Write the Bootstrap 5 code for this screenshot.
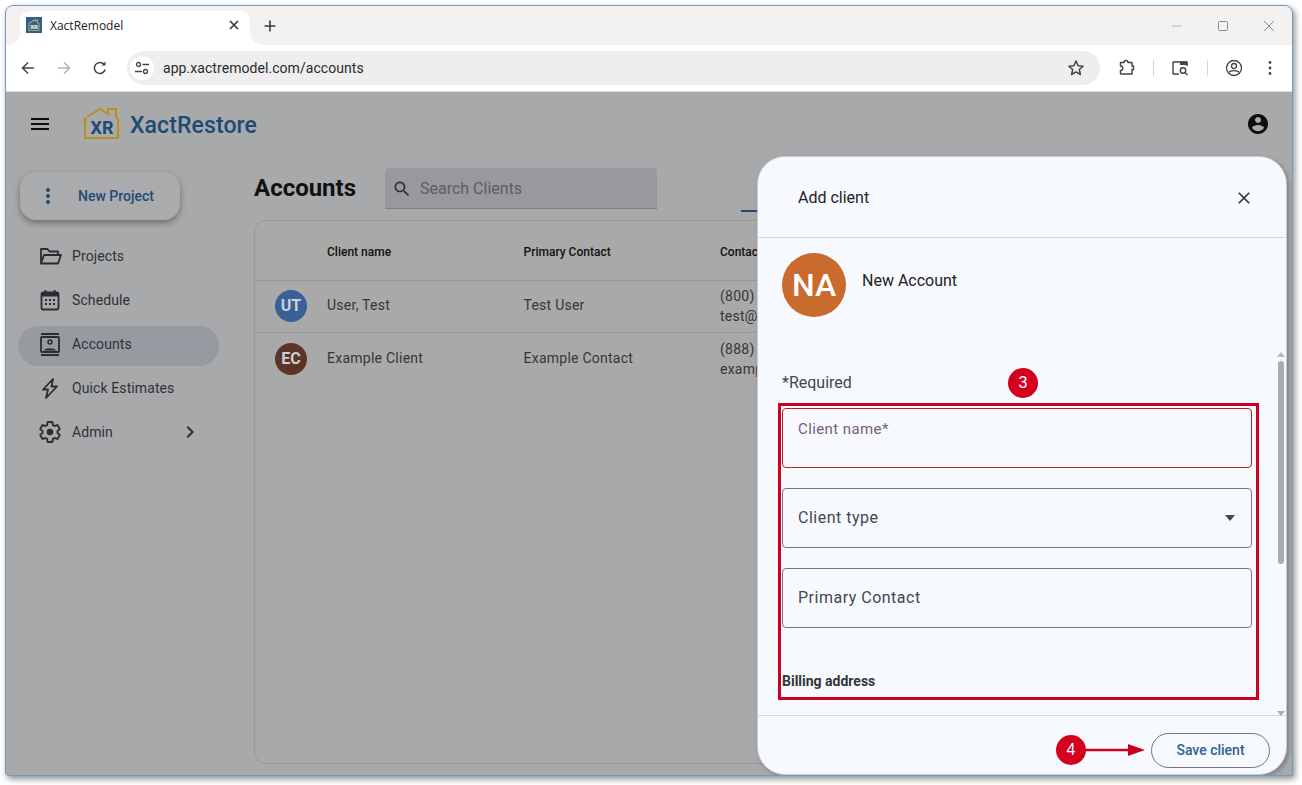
<!DOCTYPE html>
<html lang="en">
<head>
  <meta charset="UTF-8" />
  <title>XactRemodel</title>
  <link href="https://cdn.jsdelivr.net/npm/bootstrap@5.3.3/dist/css/bootstrap.min.css" rel="stylesheet" />
  <style>
    html, body { height: 100%; }
    body { background: #fff; font-family: Roboto, "Liberation Sans", sans-serif; padding: 5px 0 0 5px; overflow: hidden; }
    .win { width: 1288px; height: 771px; border: 1px solid #6f9cc4; border-radius: 8px 8px 0 4px; box-shadow: 2px 3px 6px rgba(0,0,0,.45); background: #a8a9ab; overflow: hidden; position: relative; }

    /* browser chrome */
    .tabstrip { height: 39px; background: #f3f2f1; padding-left: 14px; flex: none; }
    .chrome-tab { width: 230px; height: 34px; background: #fff; border-radius: 10px 10px 0 0; position: relative; padding: 0 8px 6px 6px; font: 12px "Open Sans", "Liberation Sans", sans-serif; color: #222; }
    .chrome-tab::before, .chrome-tab::after { content: ""; position: absolute; bottom: 0; width: 12px; height: 12px; }
    .chrome-tab::before { left: -12px; background: radial-gradient(circle at 0 0, #f3f2f1 11.5px, #fff 12px); }
    .chrome-tab::after { right: -12px; background: radial-gradient(circle at 100% 0, #f3f2f1 11.5px, #fff 12px); }
    .favicon { width: 16px; height: 16px; background: #2c5f93; flex: none; }
    .tab-title { margin-left: 8px; }
    .plus-btn { margin-left: 8px; width: 24px; }
    .win-ctl { width: 46px; }
    .toolbar { height: 47px; background: #fff; border-bottom: 1px solid #dedede; padding-left: 4px; flex: none; }
    .tbtn { width: 36px; height: 36px; flex: none; }
    .urlbar { width: 973px; height: 34px; margin-left: 9px; margin-right: 9px; background: #efedee; border-radius: 17px; padding: 0 6px 0 3px; flex: none; }
    .site-chip { width: 24px; height: 24px; background: #fff; flex: none; }
    .url-text { margin-left: 9px; font-size: 14px; letter-spacing: .06px; color: #2a2a2c; flex-grow: 1; }
    .star-ic { margin-right: 9px; }
    .tsep { width: 1px; height: 16px; background: #d5d5d5; margin: 0 8px; flex: none; }
    .tsep-wide { margin-left: 9px; }

    /* app */
    .app-bar { height: 64px; flex: none; padding: 0 22px 0 22px; }
    .brand-name { font-size: 23px; font-weight: 500; letter-spacing: .1px; color: #1f4a75; margin-left: 11px; margin-top: 4px; }
    .brand-logo { margin-left: 30px; }
    .side { width: 248px; flex: none; padding-top: 16px; }
    .new-btn { width: 160px; height: 48px; margin-left: 14px; border-radius: 16px; background: #aaabad; box-shadow: 0 3px 6px rgba(40,40,45,.45); color: #1f4a75; font-size: 14px; font-weight: 500; padding: 0 0 0 16px; gap: 18px; border: 0; }
    .side-nav { margin-top: 18px; margin-left: 12px; width: 201px; gap: 4px; }
    .side-link { height: 40px; border-radius: 20px; padding: 0 17px 4px 20px; gap: 10px; color: #2f3136; font-size: 14px; letter-spacing: .1px; }
    .side-link.on { background: #989aa2; }
    .main-col { padding-top: 12px; min-width: 0; }
    .acc-title { font-size: 24px; font-weight: 700; color: #111; margin: 0; width: 131px; line-height: 41px; }
    .search-box { width: 272px; height: 41px; background: #98999d; border-bottom: 1px solid #808185; border-radius: 4px 4px 0 0; padding: 1px 0 0 7px; gap: 8px; color: #5d5e62; font-size: 16px; }
    .tab-mark { width: 60px; height: 2px; background: #1f4a75; margin-left: 84px; margin-bottom: -3px; align-self: flex-end; }
    .acc-card { width: 1016px; height: 544px; margin-top: 11px; background: #a9a9a9; border: 1px solid #97989a; border-radius: 12px; }
    .acc-table { --bs-table-bg: transparent; --bs-table-border-color: #97989a; table-layout: fixed; font-size: 14px; letter-spacing: .25px; color: #35363a; }
    .acc-table th { height: 59px; font-size: 12px; font-weight: 500; color: #111; letter-spacing: 0; vertical-align: middle; padding: 3px 0 0; }
    .acc-table td { height: 52px; vertical-align: middle; padding: 0 0 2px; color: #35363a; line-height: 20px; }
    .acc-table td.multi { padding: 0; }
    .acc-table tr:last-child td { height: 53px; border-bottom: 0; }
    .ava { width: 32px; height: 32px; margin-left: 20px; margin-top: 2px; color: #cfcfd6; font-weight: 700; font-size: 16px; letter-spacing: 0; }

    /* dialog */
    .dlg { position: absolute; left: 751px; top: 150px; width: 530px; height: 619px; background: #f6fafe; border: 1px solid #c9cbd0; border-radius: 28px; box-shadow: 2px 2px 4px rgba(0,0,0,.25); overflow: hidden; }
    .dlg-head { height: 81px; flex: none; border-bottom: 1px solid #d6dade; padding: 1px 32px 0 40px; font-size: 16px; color: #1f2125; }
    .dlg-body { flex-grow: 1; min-height: 0; padding: 15px 34px 0 24px; color: #2f3136; overflow: hidden; }
    .big-ava { width: 64px; height: 64px; background: #c96b2c; color: #fff; font-size: 32px; font-weight: 500; flex: none; }
    .who { margin-left: 16px; margin-top: 18px; font-size: 16px; line-height: 20px; color: #1f2125; }
    .req-note { margin-top: 56px; font-size: 16px; line-height: 20px; color: #44474e; }
    .fld { height: 60px; border: 1px solid #74777f; border-radius: 4px; background-color: transparent; color: #44474e; font-size: 16px; letter-spacing: .5px; padding: 0 15px; box-shadow: none; }
    .fld::placeholder { color: #44474e; opacity: 1; }
    .form-control.fld { padding-bottom: 2px; }
    .fld-list { margin-top: 15px; gap: 20px; }
    .fld-name { border-color: #b3261e; padding-top: 10px; color: #7b5a78; font-size: 15px; letter-spacing: .4px; line-height: 20px; }
    .form-select.fld { background-repeat: no-repeat; background-position: right 15px center; background-size: 12px 6px; background-image: url("data:image/svg+xml,%3Csvg xmlns='http://www.w3.org/2000/svg' viewBox='0 0 12 6'%3E%3Cpath fill='%2344474e' d='M1 0h10L6 6z'/%3E%3C/svg%3E"); }
    .bill-head { margin-top: 43px; font-size: 14px; font-weight: 700; line-height: 20px; color: #33353a; }
    .dlg-foot { height: 59px; flex: none; border-top: 1px solid #d6dade; padding: 17px 16px 0 0; }
    .save-btn { width: 119px; height: 35px; border: 1px solid #74777f; border-radius: 18px; background: transparent; color: #2f5f94; font-size: 14px; font-weight: 500; padding: 0; }
    .sbar { position: absolute; left: 519px; top: 193px; width: 8px; height: 366px; }
    .sbar-thumb { position: absolute; top: 11px; left: 1px; width: 6px; height: 203px; background: #a9acb0; border-radius: 3px; }
    .sbar-up, .sbar-down { position: absolute; left: 0; width: 0; height: 0; border-left: 4px solid transparent; border-right: 4px solid transparent; }
    .sbar-up { top: 2px; border-bottom: 5px solid #b5b8bc; }
    .sbar-down { bottom: 0; border-top: 5px solid #a9acb0; }

    /* red callouts drawn over the page */
    .note-box { position: absolute; left: 772px; top: 397px; width: 481px; height: 297px; border: 3px solid #cc0020; }
    .note-dot { position: absolute; width: 30px; height: 30px; background: #d5001f; color: #fff; font-size: 16px; line-height: 30px; text-align: center; font-family: "Liberation Sans", sans-serif; }
    .dot-3 { left: 1002px; top: 362px; }
    .dot-4 { left: 1050px; top: 729px; }
    .note-arrow { position: absolute; left: 1078px; top: 737px; }
  </style>
</head>
<body>
  <div class="win d-flex flex-column">

    <div class="tabstrip d-flex align-items-end">
      <div class="chrome-tab d-flex align-items-center">
        <svg class="favicon" viewBox="0 0 16 16"><path d="M3 13.500V6.500L8 3l1.500 1V3h2v2.500l1.500 1.500v6.500z" fill="none" stroke="#c9a23a" stroke-width="1.100"/><text x="8" y="12" text-anchor="middle" font-family="Roboto, sans-serif" font-size="6" font-weight="700" fill="#fff">XR</text></svg>
        <span class="tab-title flex-grow-1">XactRemodel</span>
        <svg width="16" height="16" viewBox="0 0 16 16"><path d="M4 4l8 8M12 4l-8 8" stroke="#333" stroke-width="1.600"/></svg>
      </div>
      <div class="plus-btn d-flex justify-content-center align-self-center ms-2">
        <svg width="16" height="16" viewBox="0 0 16 16"><path d="M8 2.500v11M2.500 8h11" stroke="#3c3c3c" stroke-width="1.600"/></svg>
      </div>
      <div class="ms-auto d-flex align-self-center">
        <div class="win-ctl d-flex justify-content-center"><svg width="12" height="12" viewBox="0 0 12 12"><path d="M1 6h10" stroke="#b4b4b4" stroke-width="1.200"/></svg></div>
        <div class="win-ctl d-flex justify-content-center"><svg width="12" height="12" viewBox="0 0 12 12"><rect x="1.500" y="1.500" width="9" height="9" rx="1" fill="none" stroke="#8c8c8c"/></svg></div>
        <div class="win-ctl d-flex justify-content-center"><svg width="12" height="12" viewBox="0 0 12 12"><path d="M1 1l10 10M11 1L1 11" stroke="#8c8c8c"/></svg></div>
      </div>
    </div>

    <div class="toolbar d-flex align-items-center">
      <div class="tbtn d-flex align-items-center justify-content-center"><svg width="16" height="16" viewBox="0 0 16 16"><path d="M14 8H2.500M8 2.500L2.500 8 8 13.500" fill="none" stroke="#444" stroke-width="1.500"/></svg></div>
      <div class="tbtn d-flex align-items-center justify-content-center"><svg width="16" height="16" viewBox="0 0 16 16"><path d="M2 8h11.500M8 2.500L13.500 8 8 13.500" fill="none" stroke="#b5b5b5" stroke-width="1.500"/></svg></div>
      <div class="tbtn d-flex align-items-center justify-content-center"><svg width="16" height="16" viewBox="0 0 16 16"><path d="M13.200 9.500A5.500 5.500 0 1 1 12 4.300" fill="none" stroke="#444" stroke-width="1.500"/><path d="M13.500 1.500v4h-4z" fill="#444"/></svg></div>
      <div class="urlbar d-flex align-items-center">
        <div class="site-chip rounded-circle d-flex align-items-center justify-content-center"><svg width="16" height="16" viewBox="0 0 16 16"><circle cx="4.500" cy="4.500" r="2" fill="none" stroke="#444" stroke-width="1.300"/><path d="M8.500 4.500H15M1 11.500h7" stroke="#444" stroke-width="1.300"/><circle cx="11.500" cy="11.500" r="2" fill="none" stroke="#444" stroke-width="1.300"/></svg></div>
        <span class="url-text">app.xactremodel.com/accounts</span>
        <svg class="star-ic" width="18" height="18" viewBox="0 0 18 18"><path d="M9 2l2.100 4.700 5 .5-3.800 3.300 1.100 5L9 12.900l-4.400 2.600 1.100-5L1.900 7.200l5-.5z" fill="none" stroke="#444" stroke-width="1.500" stroke-linejoin="round"/></svg>
      </div>
      <div class="tbtn d-flex align-items-center justify-content-center"><svg width="18" height="18" viewBox="0 0 18 18"><path d="M2.500 3.500h3.500a2 2 0 0 1 4 0h4v3.500h1.500v3.500H14v4.500H3a1 1 0 0 1-.5-1v-2.500a2 2 0 0 0 0-4.500z" fill="none" stroke="#444" stroke-width="1.500" stroke-linejoin="round"/></svg></div>
      <div class="tsep"></div>
      <div class="tbtn d-flex align-items-center justify-content-center"><svg width="18" height="18" viewBox="0 0 18 18"><path d="M8 15H2.500a.5.500 0 0 1-.5-.5V3.500a.5.500 0 0 1 .5-.5H15.500a.5.500 0 0 1 .5.500V7" fill="none" stroke="#444" stroke-width="1.400"/><path d="M9 2.500h7.500V6H9z" fill="#444"/><circle cx="12" cy="11.500" r="2.700" fill="none" stroke="#444" stroke-width="1.400"/><path d="M14 13.500l2.500 2.500" stroke="#444" stroke-width="1.400"/></svg></div>
      <div class="tsep tsep-wide"></div>
      <div class="tbtn d-flex align-items-center justify-content-center"><svg width="18" height="18" viewBox="0 0 18 18"><circle cx="9" cy="9" r="7.500" fill="none" stroke="#444" stroke-width="1.300"/><circle cx="9" cy="7" r="2.500" fill="none" stroke="#444" stroke-width="1.300"/><path d="M3.800 13.500c1.500-2.500 9-2.500 10.400 0" fill="none" stroke="#444" stroke-width="1.300"/></svg></div>
      <div class="tbtn d-flex align-items-center justify-content-center"><svg width="16" height="16" viewBox="0 0 16 16"><circle cx="8" cy="2.500" r="1.400" fill="#444"/><circle cx="8" cy="8" r="1.400" fill="#444"/><circle cx="8" cy="13.500" r="1.400" fill="#444"/></svg></div>
    </div>

    <div class="app-bar d-flex align-items-center">
      <svg width="24" height="24" viewBox="0 0 24 24"><path d="M3 18h18v-2H3v2zm0-5h18v-2H3v2zm0-7v2h18V6H3z" fill="#0d0d0d"/></svg>
      <svg class="brand-logo" width="37" height="34" viewBox="0 0 37 34">
        <path d="M3 13v18h33V12l-2-2V2h-8v5l-8-5L5 10" fill="none" stroke="#b8901f" stroke-width="2"/>
        <path d="M0 13.500L3 10l3 3.500z" fill="#b8901f"/>
        <text x="20" y="27" text-anchor="middle" font-family="Roboto, sans-serif" font-size="18" font-weight="700" fill="#1f4a75">XR</text>
      </svg>
      <span class="brand-name flex-grow-1">XactRestore</span>
      <svg width="24" height="24" viewBox="0 0 24 24"><path d="M12 2C6.480 2 2 6.480 2 12s4.480 10 10 10 10-4.480 10-10S17.520 2 12 2zm0 3c1.660 0 3 1.340 3 3s-1.340 3-3 3-3-1.340-3-3 1.340-3 3-3zm0 14.200c-2.500 0-4.710-1.280-6-3.220.03-1.990 4-3.080 6-3.080 1.990 0 5.970 1.090 6 3.080-1.290 1.940-3.500 3.220-6 3.220z" fill="#0d0d0d"/></svg>
    </div>

    <div class="d-flex flex-grow-1" style="min-height:0">
      <aside class="side">
        <button class="new-btn btn d-flex align-items-center" type="button">
          <svg width="24" height="24" viewBox="0 0 24 24"><path d="M12 8c1.100 0 2-.9 2-2s-.9-2-2-2-2 .9-2 2 .9 2 2 2zm0 2c-1.100 0-2 .9-2 2s.9 2 2 2 2-.9 2-2-.9-2-2-2zm0 6c-1.100 0-2 .9-2 2s.9 2 2 2 2-.9 2-2-.9-2-2-2z" fill="#1f4a75"/></svg>
          New Project
        </button>
        <nav class="side-nav nav flex-column">
          <div class="side-link d-flex align-items-center">
            <svg width="24" height="24" viewBox="0 0 24 24"><path d="M3 19.500V5h6.500l2 2.500H20V11M3 19.500L6 11h17l-3 8.500z" fill="none" stroke="#2b2c30" stroke-width="1.800" stroke-linejoin="round"/></svg>
            Projects
          </div>
          <div class="side-link d-flex align-items-center">
            <svg width="24" height="24" viewBox="0 0 24 24"><rect x="3.500" y="4.500" width="17" height="17" rx="1.500" fill="none" stroke="#2b2c30" stroke-width="1.800"/><path d="M3.500 8.500h17V5h-17z" fill="#2b2c30"/><path d="M7.500 2v3M16.500 2v3" stroke="#2b2c30" stroke-width="2"/><path d="M7 12h2M11 12h2M15 12h2M7 16h2M11 16h2M15 16h2" stroke="#2b2c30" stroke-width="1.800"/></svg>
            Schedule
          </div>
          <div class="side-link on d-flex align-items-center">
            <svg width="24" height="24" viewBox="0 0 24 24"><path d="M3 2h18M3 23h18" stroke="#2b2c30" stroke-width="2"/><rect x="3" y="5" width="18" height="15" rx="1" fill="none" stroke="#2b2c30" stroke-width="1.800"/><circle cx="12" cy="10" r="2" fill="none" stroke="#2b2c30" stroke-width="1.600"/><path d="M6 18.500c1-3 11-3 12 0z" fill="#2b2c30"/></svg>
            Accounts
          </div>
          <div class="side-link d-flex align-items-center">
            <svg width="24" height="24" viewBox="0 0 24 24"><path d="M15 3L5 13.500h5L8 22l11-11.500h-5.500z" fill="none" stroke="#2b2c30" stroke-width="1.800" stroke-linejoin="round"/></svg>
            Quick Estimates
          </div>
          <div class="side-link d-flex align-items-center">
            <svg width="24" height="24" viewBox="0 0 24 24"><path d="M19.430 12.980c.04-.32.07-.64.07-.98 0-.34-.03-.66-.07-.98l2.110-1.650c.19-.15.24-.42.12-.64l-2-3.460c-.12-.22-.39-.3-.61-.22l-2.490 1c-.52-.4-1.080-.73-1.690-.98l-.38-2.650C14.460 2.180 14.250 2 14 2h-4c-.25 0-.46.18-.49.42l-.38 2.650c-.61.25-1.170.59-1.690.98l-2.490-1c-.23-.09-.49 0-.61.22l-2 3.460c-.13.22-.07.49.12.64l2.110 1.650c-.04.32-.07.65-.07.98 0 .33.03.66.07.98l-2.110 1.650c-.19.15-.24.42-.12.64l2 3.460c.12.22.39.3.61.22l2.490-1c.52.4 1.080.73 1.690.98l.38 2.650c.03.24.24.42.49.42h4c.25 0 .46-.18.49-.42l.38-2.650c.61-.25 1.170-.59 1.690-.98l2.490 1c.23.09.49 0 .61-.22l2-3.460c.12-.22.07-.49-.12-.64l-2.110-1.650z" fill="none" stroke="#2b2c30" stroke-width="1.800"/><circle cx="12" cy="12" r="3.200" fill="#2b2c30"/></svg>
            <span class="flex-grow-1">Admin</span>
            <svg width="24" height="24" viewBox="0 0 24 24"><path d="M10 6L8.590 7.410 13.170 12l-4.580 4.590L10 18l6-6z" fill="#2b2c30"/></svg>
          </div>
        </nav>
      </aside>

      <main class="main-col flex-grow-1">
        <div class="d-flex align-items-center">
          <h1 class="acc-title">Accounts</h1>
          <div class="search-box d-flex align-items-center">
            <svg width="20" height="20" viewBox="0 0 24 24"><path d="M15.500 14h-.79l-.28-.27C15.410 12.590 16 11.110 16 9.500 16 5.910 13.090 3 9.500 3S3 5.910 3 9.500 5.910 16 9.500 16c1.610 0 3.090-.59 4.230-1.570l.27.28v.79l5 4.990L20.490 19l-4.990-5zm-6 0C7.010 14 5 11.990 5 9.500S7.010 5 9.500 5 14 7.010 14 9.500 11.990 14 9.500 14z" fill="#303135"/></svg>
            Search Clients
          </div>
          <div class="tab-mark"></div>
        </div>
        <div class="acc-card">
          <table class="table acc-table mb-0">
            <colgroup><col style="width:72px"><col style="width:196.500px"><col style="width:196.500px"><col></colgroup>
            <thead><tr><th></th><th>Client name</th><th>Primary Contact</th><th>Contact</th></tr></thead>
            <tbody>
              <tr>
                <td><div class="ava rounded-circle d-flex align-items-center justify-content-center" style="background:#3a6098">UT</div></td>
                <td>User, Test</td><td>Test User</td><td class="multi">(800)<br>test@</td>
              </tr>
              <tr>
                <td><div class="ava rounded-circle d-flex align-items-center justify-content-center" style="background:#5b3427">EC</div></td>
                <td>Example Client</td><td>Example Contact</td><td class="multi">(888)<br>examp</td>
              </tr>
            </tbody>
          </table>
        </div>
      </main>
    </div>

    <section class="dlg d-flex flex-column">
      <div class="dlg-head d-flex align-items-center justify-content-between">
        <span>Add client</span>
        <svg width="20" height="20" viewBox="0 0 24 24"><path d="M19 6.410L17.590 5 12 10.590 6.410 5 5 6.410 10.590 12 5 17.590 6.410 19 12 13.410 17.590 19 19 17.590 13.410 12z" fill="#3a3c42"/></svg>
      </div>
      <div class="dlg-body">
        <div class="d-flex align-items-start">
          <div class="big-ava rounded-circle d-flex align-items-center justify-content-center">NA</div>
          <div class="who">New Account</div>
        </div>
        <div class="req-note">*Required</div>
        <form class="fld-list d-flex flex-column">
          <label class="fld fld-name d-block">Client name*</label>
          <select class="form-select fld"><option>Client type</option></select>
          <input class="form-control fld" type="text" placeholder="Primary Contact" />
        </form>
        <div class="bill-head">Billing address</div>
      </div>
      <div class="dlg-foot d-flex justify-content-end align-items-start">
        <button class="save-btn btn" type="button">Save client</button>
      </div>
      <div class="sbar"><div class="sbar-up"></div><div class="sbar-thumb"></div><div class="sbar-down"></div></div>
    </section>

    <div class="note-box"></div>
    <div class="note-dot dot-3 rounded-circle">3</div>
    <div class="note-dot dot-4 rounded-circle">4</div>
    <svg class="note-arrow" width="62" height="14" viewBox="0 0 62 14"><path d="M0 7h46" stroke="#cc0020" stroke-width="2.500"/><path d="M44 1l17 6-17 6z" fill="#cc0020"/></svg>
  </div>

  <script src="https://cdn.jsdelivr.net/npm/bootstrap@5.3.3/dist/js/bootstrap.bundle.min.js"></script>
</body>
</html>
